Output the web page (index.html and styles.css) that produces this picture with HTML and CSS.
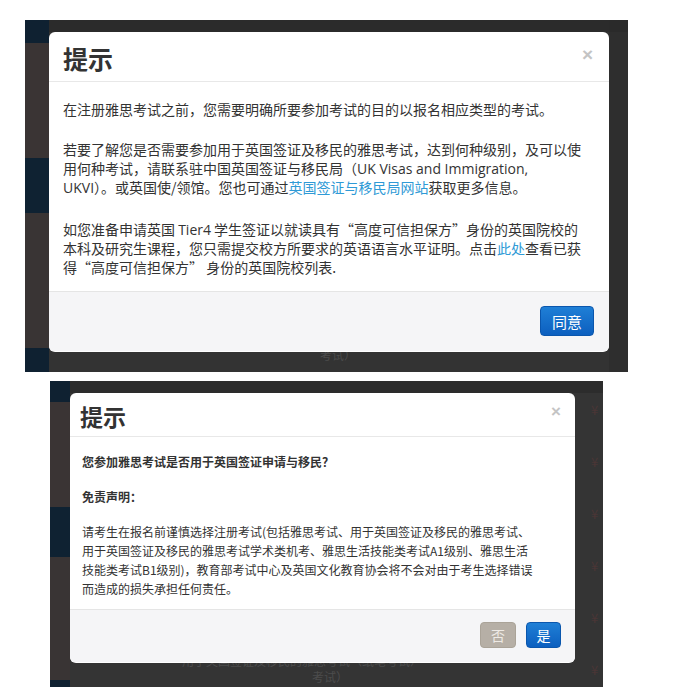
FILE: index.html
```html
<!DOCTYPE html>
<html lang="zh-CN">
<head>
<meta charset="utf-8">
<title>提示</title>
<link rel="stylesheet" href="styles.css">
</head>
<body>
<div class="shot shot-one">
  <div class="stripe stripe-one"></div>
  <div class="stage stage-one">
    <div class="modal modal-one">
      <div class="modal-header header-one">
        <h1 class="title title-one">提示</h1>
        <span class="close">×</span>
      </div>
      <div class="modal-body body-one">
        <p class="para p-a">在注册雅思考试之前，您需要明确所要参加考试的目的以报名相应类型的考试。</p>
        <p class="para p-b">若要了解您是否需要参加用于英国签证及移民的雅思考试，达到何种级别，及可以使<br>用何种考试，请联系驻中国英国签证与移民局（<span class="latin">UK Visas and Immigration,</span><br><span class="latin">UKVI</span>）。或英国使/领馆。您也可通过<a class="link" href="#">英国签证与移民局网站</a>获取更多信息。</p>
        <p class="para p-c">如您准备申请英国 <span class="latin">Tier4</span> 学生签证以就读具有“高度可信担保方”身份的英国院校的<br>本科及研究生课程，您只需提交校方所要求的英语语言水平证明。点击<a class="link" href="#">此处</a>查看已获<br>得“高度可信担保方” 身份的英国院校列表.</p>
      </div>
      <div class="modal-footer footer-one">
        <button class="btn btn-primary btn-agree">同意</button>
      </div>
    </div>
    <div class="ghost ghost-one">考试）</div>
  </div>
  <div class="side side-one"></div>
</div>

<div class="shot shot-two">
  <div class="stripe stripe-two"></div>
  <div class="stage stage-two">
    <div class="modal modal-two">
      <div class="modal-header header-two">
        <h1 class="title title-two">提示</h1>
        <span class="close close-two">×</span>
      </div>
      <div class="modal-body body-two">
        <p class="strong s-a">您参加雅思考试是否用于英国签证申请与移民？</p>
        <p class="strong s-b">免责声明：</p>
        <p class="small">请考生在报名前谨慎选择注册考试(包括雅思考试、用于英国签证及移民的雅思考试、<br>用于英国签证及移民的雅思考试学术类机考、雅思生活技能类考试A1级别、雅思生活<br>技能类考试B1级别)，教育部考试中心及英国文化教育协会将不会对由于考生选择错误<br>而造成的损失承担任何责任。</p>
      </div>
      <div class="modal-footer footer-two">
        <button class="btn btn-muted">否</button>
        <button class="btn btn-primary btn-yes">是</button>
      </div>
    </div>
    <div class="ghost ghost-two">用于英国签证及移民的雅思考试（纸笔考试）</div>
    <div class="ghost ghost-three">考试）</div>
  </div>
  <div class="side side-two">
    <span class="yen">¥</span>
    <span class="yen">¥</span>
    <span class="yen">¥</span>
    <span class="yen">¥</span>
    <span class="yen">¥</span>
    <span class="yen">¥</span>
  </div>
</div>
</body>
</html>
```
FILE: styles.css
```css
* { box-sizing: border-box; }
html, body { margin: 0; padding: 0; background: #ffffff; }
body {
  font-family: "Noto Sans CJK SC", "Liberation Sans", sans-serif;
  color: #333;
  padding-top: 20px;
}

.shot {
  display: flex;
  background: #333333;
  overflow: hidden;
}
.shot-one {
  margin-left: 25px;
  width: 603px;
  height: 352px;
  background: linear-gradient(to bottom, #2b2b2b 0, #2b2b2b 12px, #333 12px);
}
.shot-two {
  margin-left: 50px;
  margin-top: 9px;
  width: 553px;
  height: 306px;
  background: linear-gradient(to bottom, #2c2c2c 0, #2c2c2c 12px, #343434 12px);
}

.stripe { flex: none; }
.stripe-one {
  width: 24px;
  background: linear-gradient(to bottom,
    #0f2131 0, #0f2131 23px,
    #3a3434 23px, #3a3434 138px,
    #0f2232 138px, #0f2232 193px,
    #393434 193px, #393434 328px,
    #0f2131 328px);
}
.stripe-two {
  width: 20px;
  background: linear-gradient(to bottom,
    #0f2131 0, #0f2131 21px,
    #3a3434 21px, #3a3434 126px,
    #0f2232 126px, #0f2232 176px,
    #393434 176px, #393434 299px,
    #0f2131 299px);
}

.stage { position: relative; flex: none; }
.stage-one { width: 560px; padding-top: 12px; }
.stage-two { width: 505px; padding-top: 12px; }

.side { flex: 1; }
.side-one {
  background: linear-gradient(to bottom, #2a2a2a 0, #2a2a2a 12px, #2e2e2e 12px);
}
.side-two {
  display: flex;
  flex-direction: column;
  padding-top: 20px;
  padding-left: 16px;
  gap: 34px;
}
.yen {
  font-size: 13px;
  line-height: 18px;
  color: #4a3636;
}

.modal {
  background: #fff;
  border-radius: 6px;
  overflow: hidden;
  position: relative;
  z-index: 1;
}
.modal-one { height: 320px; }
.modal-two { height: 270px; }

.modal-header {
  display: flex;
  align-items: center;
  justify-content: space-between;
  border-bottom: 1px solid #e8e8e8;
}
.header-one { height: 50px; padding: 0 16px 0 14px; }
.header-two { height: 44px; padding: 0 14px 0 10px; }

.title {
  margin: 0;
  font-weight: 700;
  color: #333;
}
.title-one { font-size: 25px; line-height: 30px; padding-top: 2px; }
.title-two { font-size: 23px; line-height: 28px; padding-top: 2px; }

.close {
  font-family: "Liberation Sans", sans-serif;
  font-size: 19px;
  font-weight: 700;
  color: #c4c4c4;
  line-height: 20px;
  margin-top: -4px;
}
.close-two { font-size: 17px; margin-top: -6px; }

.body-one { padding: 18px 14px 14px 14px; height: 209px; }
.body-two { padding: 15px 12px 10px 12px; height: 172px; }

.para {
  margin: 0;
  font-size: 14px;
  line-height: 19px;
  color: #333;
  white-space: nowrap;
}
.latin { font-family: "Open Sans", "Noto Sans CJK SC", sans-serif; }
.p-a { margin-bottom: 21px; }
.p-b { margin-bottom: 23px; }

.link { color: #2f9ad6; text-decoration: none; }

.strong {
  margin: 0 0 16px 0;
  font-size: 12px;
  line-height: 19px;
  font-weight: 700;
  color: #333;
}
.small {
  margin: 0;
  font-size: 12px;
  line-height: 19px;
  color: #333;
  white-space: nowrap;
}

.modal-footer {
  display: flex;
  justify-content: flex-end;
  border-top: 1px solid #e5e5e5;
  background: #f5f5f7;
}
.footer-one { height: 60px; padding: 14px 15px 0 0; }
.footer-two { height: 53px; padding: 12px 14px 0 0; gap: 10px; }

.btn {
  font-family: "Noto Sans CJK SC", "Liberation Sans", sans-serif;
  border: none;
  border-radius: 4px;
  color: #fff;
  padding: 0;
  cursor: pointer;
}
.btn-primary {
  background: linear-gradient(to bottom, #1f7fd6 0%, #0c5fbf 100%);
  border: 1px solid #0a56ad;
}
.btn-agree { width: 54px; height: 30px; font-size: 15px; }
.btn-yes { width: 35px; height: 26px; font-size: 14px; }
.btn-muted {
  width: 36px;
  height: 26px;
  font-size: 14px;
  background: #b6afa6;
  color: #eeeae5;
  border: 1px solid #aaa398;
}

.ghost {
  position: absolute;
  color: #4c4c4c;
  font-size: 12px;
  line-height: 14px;
  white-space: nowrap;
  z-index: 0;
}
.ghost-one { left: 271px; top: 328px; }
.ghost-two { left: 112px; top: 273px; }
.ghost-three { left: 242px; top: 289px; }
```
